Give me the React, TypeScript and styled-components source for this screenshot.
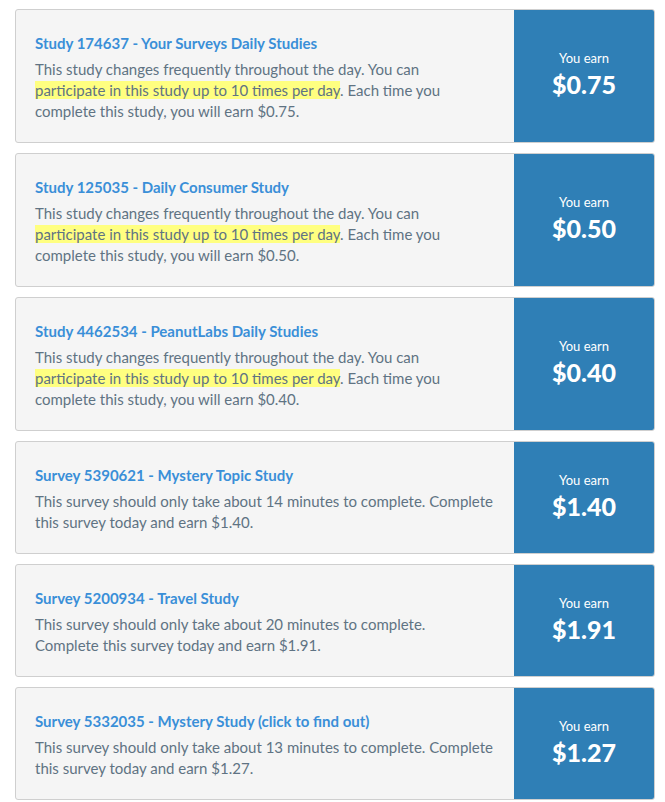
import React from "react";
import styled, { createGlobalStyle } from "styled-components";

const GlobalStyle = createGlobalStyle`
  body {
    margin: 0;
    background: #ffffff;
    font-family: Lato, "Open Sans", Arial, sans-serif;
  }
`;

type Part = { text: string; mark?: boolean };

type Offer = {
  title: string;
  amount: string;
  lines: Part[][];
};

const studyLines = (amount: string): Part[][] => [
  [{ text: "This study changes frequently throughout the day. You can" }],
  [
    { text: "participate in this study up to 10 times per day", mark: true },
    { text: ". Each time you" },
  ],
  [{ text: `complete this study, you will earn ${amount}.` }],
];

const offers: Offer[] = [
  {
    title: "Study 174637 - Your Surveys Daily Studies",
    amount: "$0.75",
    lines: studyLines("$0.75"),
  },
  {
    title: "Study 125035 - Daily Consumer Study",
    amount: "$0.50",
    lines: studyLines("$0.50"),
  },
  {
    title: "Study 4462534 - PeanutLabs Daily Studies",
    amount: "$0.40",
    lines: studyLines("$0.40"),
  },
  {
    title: "Survey 5390621 - Mystery Topic Study",
    amount: "$1.40",
    lines: [
      [{ text: "This survey should only take about 14 minutes to complete. Complete" }],
      [{ text: "this survey today and earn $1.40." }],
    ],
  },
  {
    title: "Survey 5200934 - Travel Study",
    amount: "$1.91",
    lines: [
      [{ text: "This survey should only take about 20 minutes to complete." }],
      [{ text: "Complete this survey today and earn $1.91." }],
    ],
  },
  {
    title: "Survey 5332035 - Mystery Study (click to find out)",
    amount: "$1.27",
    lines: [
      [{ text: "This survey should only take about 13 minutes to complete. Complete" }],
      [{ text: "this survey today and earn $1.27." }],
    ],
  },
];

export default function App() {
  return (
    <>
      <GlobalStyle />
      <List>
        {offers.map((o) => (
          <Card key={o.title}>
            <Body>
              <Title href="#">{o.title}</Title>
              <Description>
                {o.lines.map((line, li) => (
                  <Line key={li}>
                    {line.map((p, i) =>
                      p.mark ? <Mark key={i}>{p.text}</Mark> : <span key={i}>{p.text}</span>
                    )}
                  </Line>
                ))}
              </Description>
            </Body>
            <Earn>
              <EarnLabel>You earn</EarnLabel>
              <EarnAmount>{o.amount}</EarnAmount>
            </Earn>
          </Card>
        ))}
      </List>
    </>
  );
}

const List = styled.div`
  display: flex;
  flex-direction: column;
  gap: 10px;
  padding: 9px 10px 0 15px;
`;

const Card = styled.div`
  display: flex;
  width: 640px;
  box-sizing: border-box;
  background: #f5f5f5;
  border: 1px solid #cfcfcf;
  border-radius: 3px;
  overflow: hidden;
`;

const Body = styled.div`
  flex: 1;
  min-width: 0;
  padding: 23px 12px 20px 19px;
`;

const Title = styled.a`
  display: block;
  font-size: 15px;
  font-weight: 700;
  line-height: 20px;
  color: #3a8fd8;
  text-decoration: none;
  margin-bottom: 6px;
`;

const Description = styled.div`
  font-size: 15px;
  line-height: 21px;
  color: #5f7383;
`;

const Line = styled.div`
  white-space: nowrap;
`;

const Mark = styled.span`
  background: #ffff80;
`;

const Earn = styled.div`
  width: 140px;
  flex: none;
  background: #2f7fb6;
  color: #ffffff;
  display: flex;
  flex-direction: column;
  align-items: center;
  justify-content: center;
  gap: 4px;
  padding-bottom: 4px;
  box-sizing: border-box;
`;

const EarnLabel = styled.div`
  font-size: 13px;
  line-height: 16px;
`;

const EarnAmount = styled.div`
  font-size: 25px;
  font-weight: 900;
  line-height: 28px;
`;
